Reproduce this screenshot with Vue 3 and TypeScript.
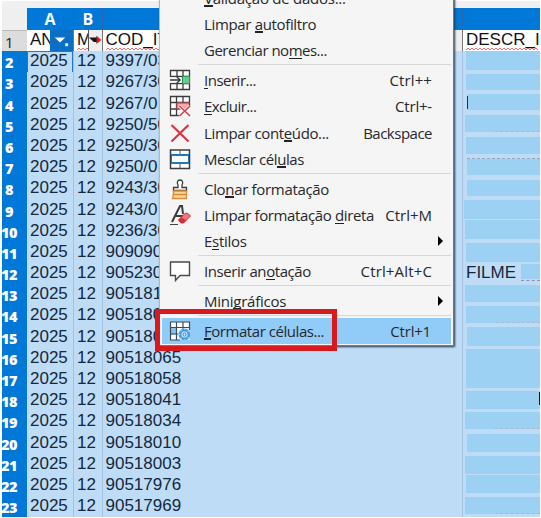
<script setup lang="ts">
interface Row { n: number; code: string; x: number; y: number; h: number; text?: string; mark?: string }
interface Item { pre: string; key: string; post: string; shortcut?: string; icon?: string; sub?: boolean; active?: boolean; ls: number; sls?: number }

const PITCH = 21.2
const raw: [string, number, number, number, string?][] = [
  ['9397/03', 466, 51.5, 19], ['9267/30', 466, 74, 16.5], ['9267/0', 467, 94.5, 16, 'bar'],
  ['9250/50', 465, 115.5, 16.5, 'dots'], ['9250/30', 466, 137.5, 16.5], ['9250/0', 467, 159.5, 16, 'top'],
  ['9243/30', 467, 180.5, 16], ['9243/0', 464, 200.5, 18.5], ['9236/30', 465, 220.5, 19],
  ['909090', 466, 243.5, 19], ['905230', 521, 264, 15, 'wave'], ['905181', 465, 285, 17],
  ['905180', 466, 306.5, 16.5, 'dots'], ['905180', 467, 327, 19], ['90518065', 466, 349, 20.3],
  ['90518058', 466, 369, 18.8], ['90518041', 466, 391.5, 17.5, 'edge'], ['90518034', 465, 412.5, 16.5, 'dots'],
  ['90518010', 467, 434, 18], ['90518003', 465, 456, 18], ['90517976', 466, 475.5, 17.5], ['90517969', 465, 497.3, 16.7, 'dots'],
]
const rows: Row[] = raw.map(([code, x, y, h, mark], i) => ({
  n: i + 2, code, x: x - 463, y: y - (51.2 + i * PITCH), h, mark, text: i === 10 ? 'FILME' : undefined,
}))

const groups: Item[][] = [
  [
    { pre: '', key: 'V', post: 'alidação de dados...', ls: -0.25 },
    { pre: 'Limpar ', key: 'a', post: 'utofiltro', ls: -0.34 },
    { pre: 'Gerenciar no', key: 'm', post: 'es...', ls: -0.5 },
  ],
  [
    { pre: '', key: 'I', post: 'nserir...', shortcut: 'Ctrl++', icon: 'insert', ls: -0.5, sls: 0.1 },
    { pre: '', key: 'E', post: 'xcluir...', shortcut: 'Ctrl+-', icon: 'delete', ls: -0.58 },
    { pre: 'Limpar cont', key: 'e', post: 'údo...', shortcut: 'Backspace', icon: 'clear', ls: -0.37, sls: -0.5 },
    { pre: 'Mesclar cél', key: 'u', post: 'las', icon: 'merge', ls: -0.42 },
  ],
  [
    { pre: 'Clo', key: 'n', post: 'ar formatação', icon: 'brush', ls: -0.32 },
    { pre: 'Limpar formatação ', key: 'd', post: 'ireta', shortcut: 'Ctrl+M', icon: 'eraser', ls: -0.37, sls: 0 },
    { pre: 'E', key: 's', post: 'tilos', sub: true, ls: -0.3 },
  ],
  [{ pre: 'Inserir an', key: 'o', post: 'tação', shortcut: 'Ctrl+Alt+C', icon: 'note', ls: -0.43, sls: 0.15 }],
  [{ pre: 'Mini', key: 'g', post: 'ráficos', sub: true, ls: -0.24 }],
  [{ pre: '', key: 'F', post: 'ormatar células...', shortcut: 'Ctrl+1', icon: 'format', active: true, ls: -0.45 }],
]
</script>

<template>
  <main class="screen">
    <div class="sheet">
      <div class="strip"></div>
      <div class="line heads">
        <span class="corner"></span><span class="head">A</span><span class="head">B</span><span class="head"></span><span class="head"></span>
      </div>
      <div class="line first">
        <span class="rownum">1</span>
        <span class="title a">AN
          <span class="filter blue"><svg viewBox="0 0 23 21"><path d="M5 8h11l-5.500 5z" fill="#fff" /><path d="M16 14h3v3h-3z" fill="#fff" /></svg></span>
        </span>
        <span class="title">M
          <svg class="zig" viewBox="0 0 12 4"><path d="M0 3l2-2 2 2 2-2 2 2 2-2 2 2" /></svg>
          <span class="filter small"><svg viewBox="0 0 14 21"><path d="M0 8h8v-2l4 4.500-4 4v-2H5z" fill="#151515" /><path d="M8 6.500l5 4-5 4z" fill="#d91f2a" /></svg></span>
        </span>
        <span class="title">COD_IT<svg class="zig long" viewBox="0 0 60 4"><path d="M0 3l2-2 2 2 2-2 2 2 2-2 2 2 2-2 2 2 2-2 2 2 2-2 2 2 2-2 2 2 2-2 2 2 2-2 2 2 2-2 2 2 2-2 2 2 2-2 2 2 2-2 2 2 2-2 2 2" /></svg>
          <span class="filter end"></span>
        </span>
        <span class="title">DESCR_I<svg class="zig descr" viewBox="0 0 76 4"><path d="M0 3l2-2 2 2 2-2 2 2 2-2 2 2 2-2 2 2 2-2 2 2 2-2 2 2 2-2 2 2 2-2 2 2 2-2 2 2 2-2 2 2 2-2 2 2 2-2 2 2 2-2 2 2 2-2 2 2 2-2 2 2 2-2 2 2 2-2 2 2 2-2 2 2" /></svg></span>
      </div>
      <div v-for="r in rows" :key="r.n" class="line">
        <span class="num"><b>{{ r.n }}</b></span>
        <span class="cell" :class="{ cursor: r.n === 2 }">2025</span>
        <span class="cell">12</span>
        <span class="cell">{{ r.code }}</span>
        <span class="cell desc">
          <span v-if="r.text" class="word">{{ r.text }}</span>
          <span class="patch" :class="r.mark" :style="{ left: r.x + 'px', top: r.y + 'px', height: r.h + 'px' }"></span>
        </span>
      </div>
    </div>

    <nav class="menu">
      <div v-for="(g, gi) in groups" :key="gi" class="group">
        <div v-for="it in g" :key="it.post" class="item" :class="{ active: it.active }">
          <span class="icon">
            <svg v-if="it.icon === 'insert'" viewBox="0 0 22 22">
              <path d="M1.500 1.500h19v19h-19z" fill="#fff" />
              <path d="M1.500 8V1.500h19v19h-19V14M1.500 7.500h19M1.500 14.500h19M8 1v6.500M14 1v20M8 14v7" fill="none" stroke="#3c3c3e" stroke-width="1.300" />
              <path d="M13.500 7.500h7v7h-7z" fill="#6dc98c" stroke="#239b50" />
              <path d="M0 8.300h12v5.500H0z" fill="#f5f5f5" />
              <path d="M1 11h10M7.500 7.500L11 11l-3.500 3.500" fill="none" stroke="#3c3c3e" stroke-width="1.400" />
            </svg>
            <svg v-else-if="it.icon === 'delete'" viewBox="0 0 22 22">
              <path d="M1.500 1.500h19v19h-19z" fill="#fff" />
              <path d="M7.500 8h13v6h-13z" fill="#f5a9ad" />
              <path d="M10 20.500H1.500v-19h19V12M1.500 7.500h19M1.500 14h9M7.500 1v19.500M14 1v7" fill="none" stroke="#3c3c3e" stroke-width="1.300" />
              <path d="M8 8h12.500M8 8v6h5" fill="none" stroke="#df5258" />
              <path d="M10.500 11L21 21M21 11L10.500 21" stroke="#f5f5f5" stroke-width="3" />
              <path d="M10.500 11L21 21M21 11L10.500 21" stroke="#dd3942" stroke-width="1.500" />
            </svg>
            <svg v-else-if="it.icon === 'clear'" viewBox="0 0 22 22"><path d="M2.500 3l17 16.500M19.500 3l-17 16.500" stroke="#d9363d" stroke-width="2.200" /></svg>
            <svg v-else-if="it.icon === 'merge'" viewBox="0 0 22 22">
              <path d="M1.500 2h19v18.500h-19z" fill="#fff" stroke="#3c3c3e" stroke-width="1.500" /><path d="M11 2v5M11 15v5" stroke="#555" />
              <path d="M2 7h18M2 15h18" fill="none" stroke="#1c78c0" stroke-width="1.800" /><path d="M2.500 7v8M19.500 7v8" stroke="#1c78c0" />
            </svg>
            <svg v-else-if="it.icon === 'brush'" viewBox="0 0 22 22">
              <path d="M4.500 12.500V9.500h4.500V7C8 5.500 7.800 2 11 2s3 3.500 2 5v2.500h4.500v3z" fill="#fff" stroke="#3c3c3e" stroke-width="1.300" />
              <path d="M4.500 13h13v7.500h-14c1-2 1-4 1-7.500zM3.500 16.500h14" fill="#fbd49a" stroke="#df8b38" stroke-width="1.300" />
            </svg>
            <svg v-else-if="it.icon === 'eraser'" viewBox="0 0 22 22">
              <path d="M3 18L11 2h2l1 8M6 12h8" fill="none" stroke="#3c3c3e" stroke-width="2" />
              <path d="M1 20.500h8" stroke="#444" />
              <path d="M9.500 16l7-7q3 0 5 3l-7 7q-3 1-5-3z" fill="#ef777b" stroke="#d72d37" />
              <path d="M9.500 16l2.700-2.700 5 3-2.700 2.700q-3 1-5-3z" fill="#d92d36" />
            </svg>
            <svg v-else-if="it.icon === 'note'" viewBox="0 0 22 22"><path d="M1.500 2h19v13.500H11l-4.500 5v-5h-5z" fill="#fff" stroke="#4a4a4c" stroke-width="1.400" /></svg>
            <svg v-else-if="it.icon === 'format'" viewBox="0 0 22 22">
              <path d="M1.500 2h19v18h-19z" fill="#fff" /><path d="M1.500 7.500h6v7h-6z" fill="#80c2f2" />
              <path d="M11 20H1.500V2h19v8M1.500 7.500h19M1.500 14h8M7.500 2v18M14 2v7" fill="none" stroke="#3c4a55" stroke-width="1.200" />
              <circle cx="15.500" cy="14.500" r="6.300" fill="#91cbf7" />
              <circle cx="15.500" cy="14.500" r="4.800" fill="#b9dcf7" stroke="#4a9bdc" stroke-width="1.600" stroke-dasharray="2.600 1.200" />
              <circle cx="15.500" cy="14.500" r="3.800" fill="#b9dcf7" stroke="#3a90d6" stroke-width="1.200" /><circle cx="15.500" cy="14.500" r="1.500" fill="#d9edfc" stroke="#3a90d6" />
            </svg>
          </span>
          <span class="label" :style="{ letterSpacing: it.ls + 'px' }">{{ it.pre }}<span class="key">{{ it.key }}</span>{{ it.post }}</span>
          <span v-if="it.shortcut" class="short" :style="{ letterSpacing: (it.sls ?? -0.2) + 'px' }">{{ it.shortcut }}</span>
          <svg v-if="it.sub" class="arrow" viewBox="0 0 5 10"><path d="M0 0l5 5-5 5z" /></svg>
        </div>
      </div>
    </nav>
    <div class="highlight"></div>
  </main>
</template>

<style>
body { background: #fff; }
</style>

<style scoped>
.screen { position: relative; width: 541px; height: 518px; overflow: hidden; background: #fff; font-family: "Liberation Sans", Arial, sans-serif; }
.sheet { margin: 1px 1px 0 2px; overflow: hidden; }
.strip { height: 7px; background: #f0f0f0; }
.line { display: grid; grid-template-columns: 25px 47px 28.500px 360.500px 77px; height: 21.200px; }
.heads { height: 22px; font: bold 16px/23px "Open Sans", sans-serif; color: #fff; text-align: center; }
.corner { background: #efefef; }
.head { background: #0078d7; border-right: 1px solid #2668ae; }
.head:last-child { border: 0; }
.first { height: 21.200px; }
.rownum { background: #dcdcdc; color: #222; font: 15px/23px "Open Sans", sans-serif; padding-left: 3px; border-top: 1px solid #bbb; box-sizing: border-box; }
.title { position: relative; padding-left: 3px; background: #fff; border-right: 1px solid #777; border-bottom: 1px solid #287ab5; box-sizing: border-box; font-size: 17px; line-height: 19px; color: #111; white-space: nowrap; overflow: hidden; }
.title:last-child { border-right: 0; }
.filter { position: absolute; right: 0; top: 0; bottom: 0; }
.filter svg { display: block; height: 20px; }
.blue { width: 23px; background: #0b6fc5; }
.small { width: 13px; background: #eee; border-left: 1px solid #555; }
.end { width: 8px; background: #eee; }
.zig { position: absolute; left: 3px; bottom: 2px; width: 12px; height: 4px; }
.zig path { fill: none; stroke: #ec6d76; stroke-width: 1; }
.long { width: 60px; }
.descr { width: 76px; }
.num { background: #0078d7; color: #fff; font: bold 14.500px/23px "Open Sans", sans-serif; letter-spacing: -0.500px; display: flex; justify-content: center; padding-right: 11px; }
.cell { position: relative; box-sizing: border-box; padding-left: 3px; border-right: 1px solid #a4c2e0; border-bottom: 1px solid #98b8d8; background: #bedcf6; color: #14283d; font-size: 17px; line-height: 19.400px; white-space: nowrap; }
.cursor { box-shadow: inset 0 0 0 1px #1c7bd0; }
.desc { border-right: 0; }
.patch { position: absolute; right: 0; background: #9cd1f4; }
.patch::after { position: absolute; }
.bar::after { content: ""; left: 0; top: 2px; width: 1px; height: 13px; background: #27313b; }
.edge::after { content: ""; right: 0; top: 1px; width: 1.500px; height: 13px; background: #111a28; }
.dots::after { content: ""; left: 30px; right: 0; bottom: 0; border-bottom: 1px dashed #a9b9d6; }
.top::after { content: ""; left: 0; right: 0; top: -1px; border-top: 1px dashed #93a9c2; }
.wave::after { content: ""; left: 0; right: 0; bottom: -2px; border-bottom: 1px dashed #9c8ab8; }

.menu { position: absolute; left: 159px; top: -16.500px; width: 295px; height: 362.500px; box-sizing: border-box; background: #f5f5f5; border: 1px solid #b8b8b8; border-right: 1px solid #777; border-bottom: 1px solid #777; box-shadow: 1px 1px 2px #26394d; font: 15px/26px "Open Sans", "Noto Sans", sans-serif; color: #28282b; }
.group + .group { padding-top: 3.500px; background: linear-gradient(#d6d6d6, #d6d6d6) 38px 1px / 253px 1px no-repeat; }
.item { display: flex; align-items: center; height: 26.300px; padding-left: 9px; padding-right: 21px; }
.active { margin: 0 2px; padding-left: 7px; padding-right: 20px; background: #91cbf8; }
.icon { width: 22px; height: 22px; margin-right: 13px; flex: none; }
.icon svg { display: block; width: 22px; height: 22px; }
.label { white-space: nowrap; }
.key { display: inline-block; height: 18px; line-height: 18px; position: relative; }
.key::after { content: ""; position: absolute; left: 0; right: 0; bottom: 0; height: 1.500px; background: #222; }
.short { margin-left: auto; white-space: nowrap; }
.arrow { width: 5px; height: 10px; margin-left: auto; margin-right: -11px; }
.highlight { position: absolute; left: 155px; top: 309px; width: 182px; height: 42px; box-sizing: border-box; border: 5px solid #d71920; }
</style>
